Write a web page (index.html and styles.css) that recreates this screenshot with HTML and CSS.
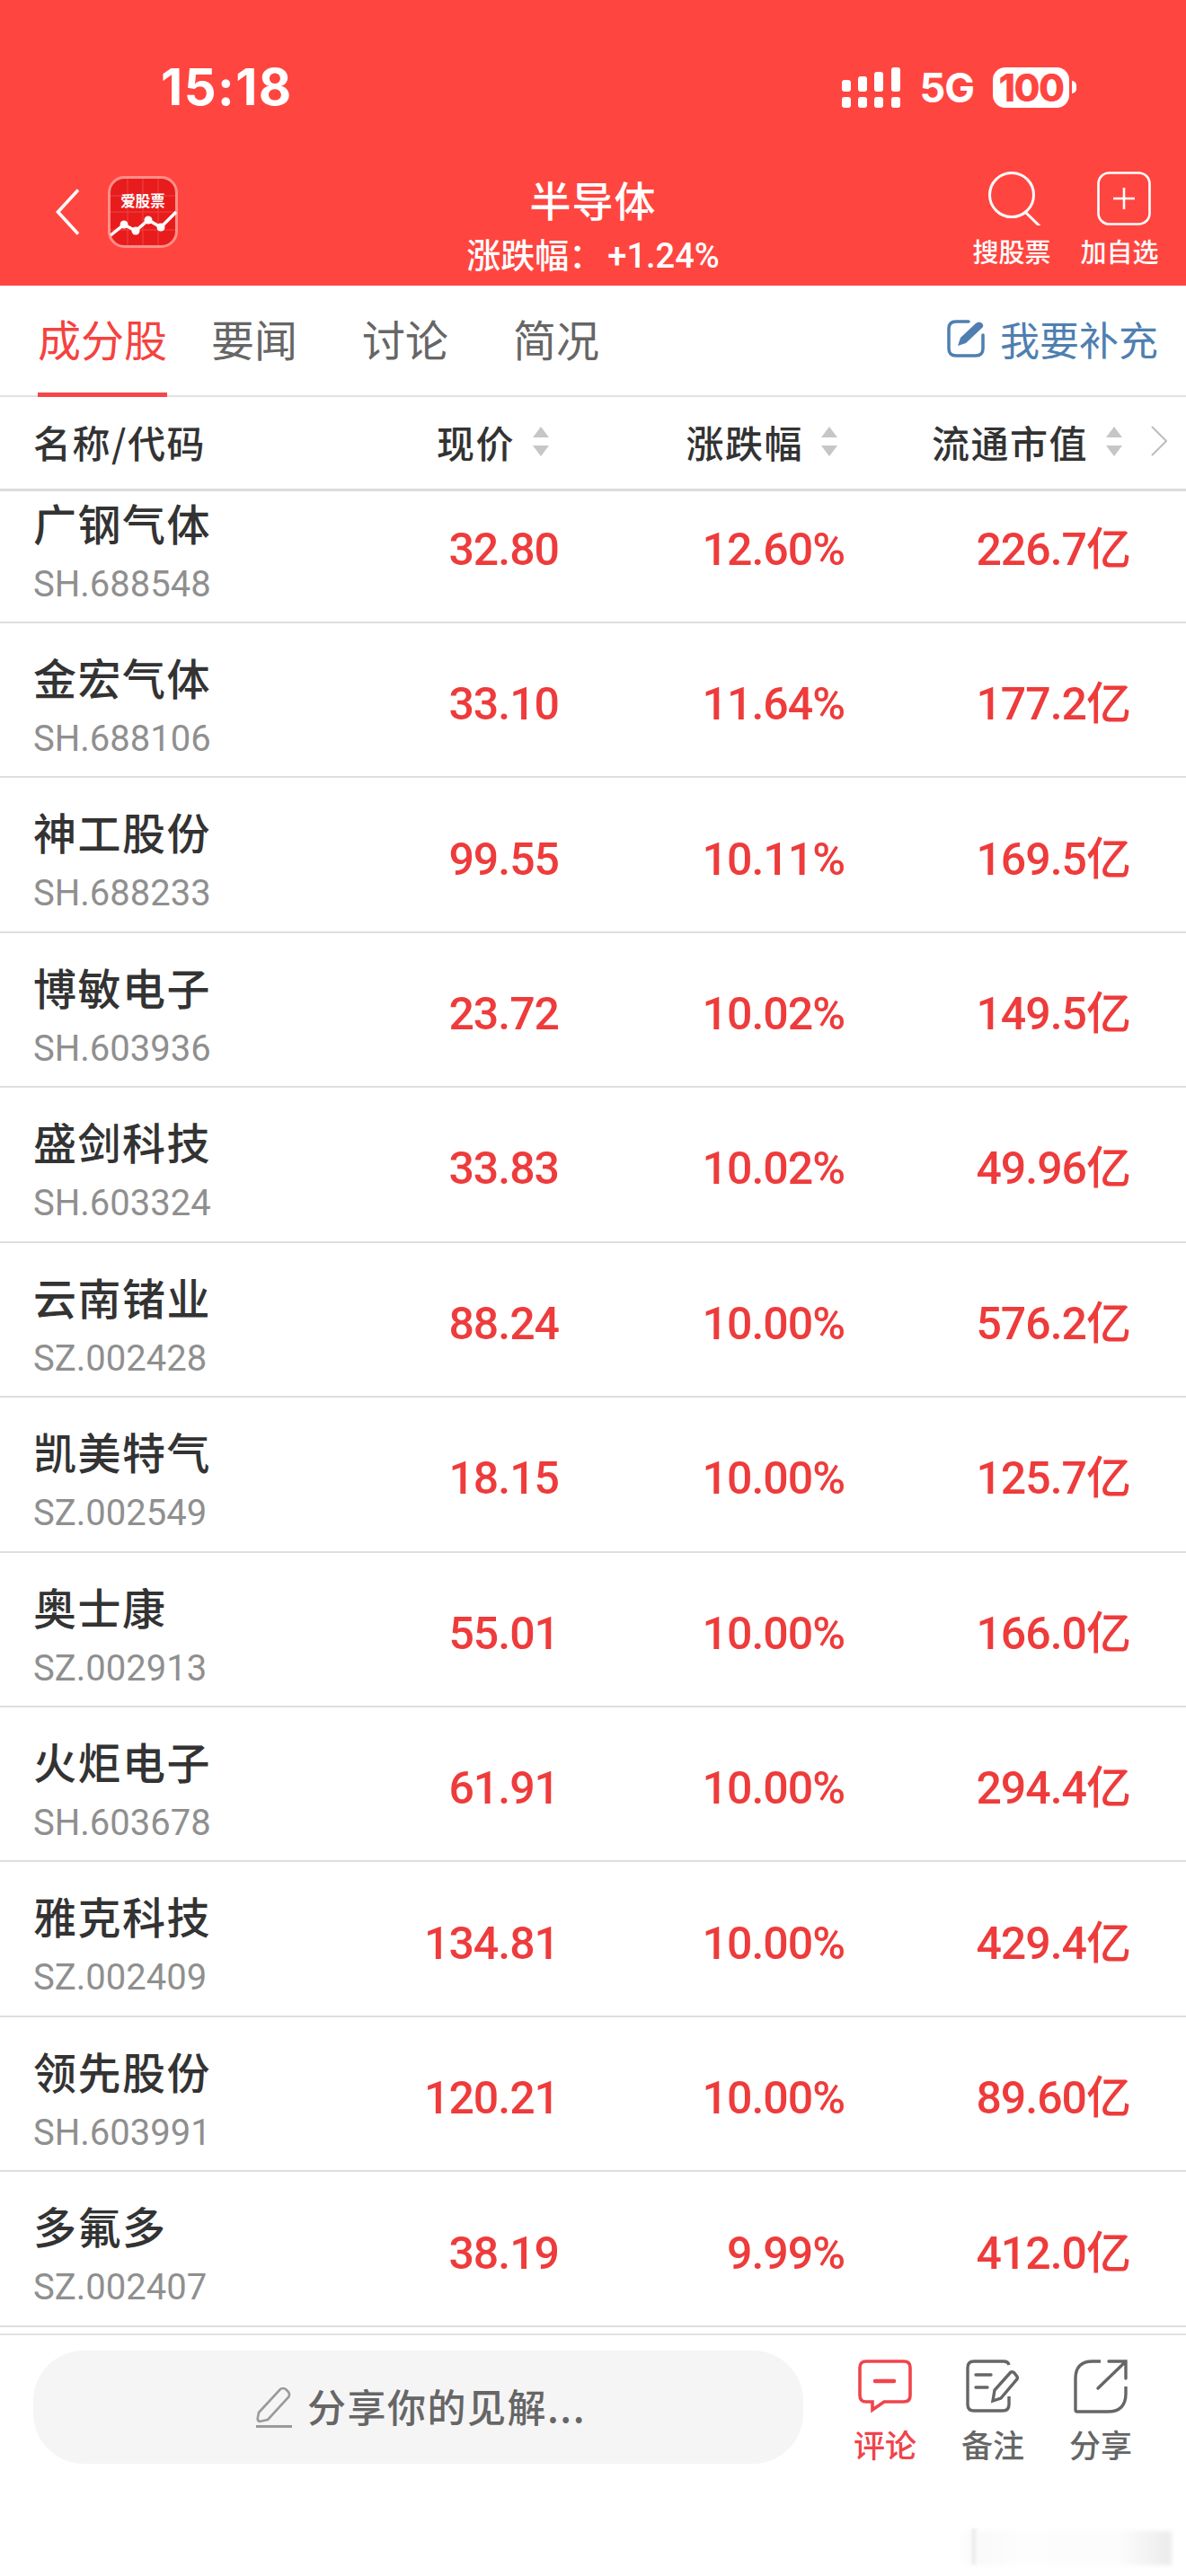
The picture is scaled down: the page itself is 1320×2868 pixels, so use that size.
FILE: index.html
```html
<!DOCTYPE html>
<html lang="zh-CN">
<head>
    <meta charset="UTF-8">
    <meta name="viewport" content="width=device-width, initial-scale=1.0">
    <title>半导体</title>
    <link rel="stylesheet" href="styles.css">
</head>
<body>
<div class="page">
    <header class="top">
        <div class="status">
            <span class="time">15:18</span>
            <div class="status-right">
                <svg class="signal" width="65" height="45" viewBox="0 0 65 45" fill="#fff">
                    <rect x="0" y="14" width="10" height="13" rx="3"/><rect x="18" y="10" width="10" height="17" rx="3"/>
                    <rect x="36" y="5" width="10" height="22" rx="3"/><rect x="55" y="0" width="10" height="27" rx="3"/>
                    <rect x="0" y="33" width="10" height="12" rx="3"/><rect x="18" y="33" width="10" height="12" rx="3"/>
                    <rect x="36" y="33" width="10" height="12" rx="3"/><rect x="55" y="33" width="10" height="12" rx="3"/>
                </svg>
                <span class="net">5G</span>
                <span class="battery">100</span>
                <span class="battery-nub"></span>
            </div>
        </div>
        <div class="nav">
            <div class="nav-left">
                <svg width="26" height="52" viewBox="0 0 26 52" fill="none" stroke="#fff" stroke-width="3.6"><path d="M25 1.5 2.5 26 25 50.500"/></svg>
                <svg class="logo" width="78" height="80" viewBox="0 0 78 80">
                    <rect x="1.500" y="1.500" width="75" height="77" rx="17" fill="#e81c1c" stroke="#ff8f88" stroke-width="3"/>
                    <path d="M3 22H75M3 40H75M3 60H75M22 3V77M39 3V77M56 3V77" stroke="#ee4444" stroke-width="1"/>
                    <text x="39" y="34" text-anchor="middle" class="logo-text">爱股票</text>
                    <path d="M3 66 18 54 31 61 45 49 59 57 76 40" fill="none" stroke="#fff" stroke-width="3.500"/>
                    <circle cx="18" cy="54" r="4.500" fill="#fff"/><circle cx="31" cy="61" r="4.500" fill="#fff"/>
                    <circle cx="45" cy="49" r="4.500" fill="#fff"/><circle cx="59" cy="57" r="4.500" fill="#fff"/>
                </svg>
            </div>
            <div class="nav-title">
                <div class="title">半导体</div>
                <div class="subtitle">涨跌幅：<span class="subtitle-num">+1.24%</span></div>
            </div>
            <div class="nav-right">
                <div class="nav-btn">
                    <svg class="nav-search" width="62" height="60" viewBox="0 0 62 60" fill="none" stroke="#fff" stroke-width="3"><circle cx="26" cy="26" r="24.500"/><path d="M41 45 60 59" transform="rotate(8 41 45)" stroke-linecap="round"/></svg>
                    <span>搜股票</span>
                </div>
                <div class="nav-btn">
                    <svg class="nav-plus" width="60" height="60" viewBox="0 0 60 60" fill="none" stroke="#fff" stroke-width="2.600"><rect x="1.500" y="1.500" width="57" height="57" rx="12"/><path d="M30 18V42M18 30H42"/></svg>
                    <span>加自选</span>
                </div>
            </div>
        </div>
    </header>

    <nav class="tabs">
        <span class="tab active">成分股</span>
        <span class="tab tab-second">要闻</span>
        <span class="tab">讨论</span>
        <span class="tab">简况</span>
        <div class="supplement">
            <svg width="42" height="42" viewBox="0 0 42 42" fill="none" stroke="#4f7fb0" stroke-width="3.500">
                <path d="M24 2H10Q2 2 2 10V32Q2 40 10 40H32Q40 40 40 32V17" stroke-linecap="round"/>
                <path d="M12 29 15 20 32 4Q36 1 39 4T38 10L21 26Z" fill="#4f7fb0" stroke="none"/>
            </svg>
            <span>我要补充</span>
        </div>
    </nav>

    <div class="thead">
        <span class="th th-name">名称/代码</span>
        <span class="th">现价<svg class="sort" width="18" height="33" viewBox="0 0 18 33" fill="#c6c6c6"><path d="M9 0 18 12H0ZM9 33 0 21H18Z"/></svg></span>
        <span class="th">涨跌幅<svg class="sort" width="18" height="33" viewBox="0 0 18 33" fill="#c6c6c6"><path d="M9 0 18 12H0ZM9 33 0 21H18Z"/></svg></span>
        <span class="th">流通市值<svg class="sort" width="18" height="33" viewBox="0 0 18 33" fill="#c6c6c6"><path d="M9 0 18 12H0ZM9 33 0 21H18Z"/></svg></span>
        <svg class="more" width="18" height="34" viewBox="0 0 18 34" fill="none" stroke="#bdbdbd" stroke-width="2"><path d="M1 1 17 17 1 33"/></svg>
    </div>

    <div class="list">
        <div class="row row-first"><div class="stock"><div class="name">广钢气体</div><div class="code">SH.688548</div></div><span class="num">32.80</span><span class="num">12.60%</span><span class="num">226.7亿</span></div>
        <div class="row"><div class="stock"><div class="name">金宏气体</div><div class="code">SH.688106</div></div><span class="num">33.10</span><span class="num">11.64%</span><span class="num">177.2亿</span></div>
        <div class="row"><div class="stock"><div class="name">神工股份</div><div class="code">SH.688233</div></div><span class="num">99.55</span><span class="num">10.11%</span><span class="num">169.5亿</span></div>
        <div class="row"><div class="stock"><div class="name">博敏电子</div><div class="code">SH.603936</div></div><span class="num">23.72</span><span class="num">10.02%</span><span class="num">149.5亿</span></div>
        <div class="row"><div class="stock"><div class="name">盛剑科技</div><div class="code">SH.603324</div></div><span class="num">33.83</span><span class="num">10.02%</span><span class="num">49.96亿</span></div>
        <div class="row"><div class="stock"><div class="name">云南锗业</div><div class="code">SZ.002428</div></div><span class="num">88.24</span><span class="num">10.00%</span><span class="num">576.2亿</span></div>
        <div class="row"><div class="stock"><div class="name">凯美特气</div><div class="code">SZ.002549</div></div><span class="num">18.15</span><span class="num">10.00%</span><span class="num">125.7亿</span></div>
        <div class="row"><div class="stock"><div class="name">奥士康</div><div class="code">SZ.002913</div></div><span class="num">55.01</span><span class="num">10.00%</span><span class="num">166.0亿</span></div>
        <div class="row"><div class="stock"><div class="name">火炬电子</div><div class="code">SH.603678</div></div><span class="num">61.91</span><span class="num">10.00%</span><span class="num">294.4亿</span></div>
        <div class="row"><div class="stock"><div class="name">雅克科技</div><div class="code">SZ.002409</div></div><span class="num">134.81</span><span class="num">10.00%</span><span class="num">429.4亿</span></div>
        <div class="row"><div class="stock"><div class="name">领先股份</div><div class="code">SH.603991</div></div><span class="num">120.21</span><span class="num">10.00%</span><span class="num">89.60亿</span></div>
        <div class="row"><div class="stock"><div class="name">多氟多</div><div class="code">SZ.002407</div></div><span class="num">38.19</span><span class="num">9.99%</span><span class="num">412.0亿</span></div>
    </div>

    <footer class="bottom">
        <div class="pill">
            <svg width="40" height="45" viewBox="0 0 40 45" fill="none" stroke="#9a9a9a" stroke-width="2.600">
                <path d="M3 28 27 2Q30 0 33 2L36 5Q38 8 36 11L13 36 4 38Q1 37 2 33Z"/>
                <path d="M0 43.500H40" stroke-width="3"/>
            </svg>
            <span>分享你的见解...</span>
        </div>
        <div class="action action-on">
            <svg width="60" height="60" viewBox="0 0 60 60" fill="none" stroke="#f0444b" stroke-width="3.600">
                <path d="M9 2H51Q58 2 58 9V40Q58 47 51 47H29L16 56V47H9Q2 47 2 40V9Q2 2 9 2Z"/>
                <path d="M19 24H40" stroke-width="4.500" stroke-linecap="round"/>
            </svg>
            <span>评论</span>
        </div>
        <div class="action">
            <svg width="60" height="60" viewBox="0 0 60 60" fill="none" stroke="#666" stroke-width="3.400">
                <path d="M48 6Q47 2 42 2H9Q2 2 2 9V50Q2 57 9 57H41Q48 57 48 50V41"/>
                <path d="M11 17H28M11 31H24" stroke-linecap="round"/>
                <path d="M30 46 32 34 50 14Q52 13 54 15L57 19Q58 21 56 23L39 43Z"/>
            </svg>
            <span>备注</span>
        </div>
        <div class="action">
            <svg width="60" height="60" viewBox="0 0 60 60" fill="none" stroke="#666" stroke-width="3.400">
                <path d="M30 2H21Q2 2 2 21V56Q2 58 4 58H38Q58 58 58 38V30"/>
                <path d="M27 32 57 3M39 2H58V21" stroke-linecap="round"/>
            </svg>
            <span>分享</span>
        </div>
    </footer>
    <div class="home-smudge"></div>
    <div class="home-mark"></div>
</div>
</body>
</html>
```

FILE: styles.css
```css
* {
    box-sizing: border-box;
}
body {
    margin: 0;
    background: #fff;
    font-family: "Noto Sans CJK SC", sans-serif;
    color: #333;
}
svg {
    display: block;
    flex: none;
}
.page {
    position: relative;
    width: 1320px;
    height: 2868px;
    display: flex;
    flex-direction: column;
    overflow: hidden;
}

/* red header */
.top {
    height: 318px;
    background: #ff4540;
    color: #fff;
    flex: none;
}
.status {
    height: 188px;
    padding: 6px 122px 0 179px;
    display: flex;
    align-items: center;
    justify-content: space-between;
}
.time {
    font-family: Inter, sans-serif;
    font-weight: 700;
    font-size: 56px;
    letter-spacing: 1.5px;
}
.status-right {
    display: flex;
    align-items: center;
}
.net {
    font-family: Inter, sans-serif;
    font-weight: 700;
    font-size: 45px;
    line-height: 45px;
    margin-left: 21px;
    letter-spacing: -1px;
}
.battery {
    width: 85px;
    height: 45px;
    margin-left: 21px;
    background: #fff;
    border-radius: 14px;
    color: #ff4540;
    font-family: Inter, sans-serif;
    font-weight: 800;
    font-size: 42px;
    line-height: 45px;
    text-align: center;
    letter-spacing: -1.5px;
}
.battery-nub {
    width: 5px;
    height: 14px;
    margin-left: 3px;
    background: #fff;
    border-radius: 0 5px 5px 0;
}
.nav {
    height: 130px;
    display: grid;
    grid-template-columns: 1fr auto 1fr;
}
.nav-left {
    display: flex;
    align-items: center;
    align-self: start;
    height: 80px;
    padding: 0 0 0 62px;
    margin-top: 8px;
}
.logo {
    margin-left: 32px;
}
.logo-text {
    font-family: "Noto Sans CJK SC", sans-serif;
    font-size: 16.500px;
    font-weight: 700;
    fill: #fff;
}
.nav-title {
    padding-top: 3px;
    text-align: center;
    font-weight: 500;
}
.title {
    font-size: 46px;
    line-height: 60px;
    letter-spacing: 1px;
}
.subtitle {
    margin-top: 4px;
    font-size: 38px;
    line-height: 54px;
}
.subtitle-num {
    font-family: Roboto, sans-serif;
    font-weight: 500;
    margin-left: 5px;
}
.nav-right {
    display: flex;
    justify-content: flex-end;
    padding: 3px 14px 0 0;
}
.nav-btn {
    width: 120px;
    display: flex;
    flex-direction: column;
    align-items: center;
    font-size: 29px;
    font-weight: 500;
    line-height: 36px;
}
.nav-btn span {
    margin-top: 10px;
}
.nav-search {
    margin-left: 10px;
}
.nav-plus {
    margin-left: 10px;
}

/* tabs */
.tabs {
    height: 124px;
    flex: none;
    display: flex;
    border-bottom: 2px solid #e2e2e2;
    color: #666;
}
.tab {
    height: 124px;
    padding-bottom: 4px;
    margin-left: 72px;
    font-size: 48px;
    display: flex;
    align-items: center;
    border-bottom: 5px solid transparent;
}
.tab.active {
    margin-left: 42px;
    color: #f5423f;
    border-bottom-color: #f5464a;
}
.tab.tab-second {
    margin-left: 49px;
}
.supplement {
    margin-left: auto;
    padding: 0 31px 4px 0;
    display: flex;
    align-items: center;
    font-size: 44px;
    color: #4f7fb0;
}
.supplement span {
    margin-left: 17px;
}

/* column titles */
.thead {
    height: 105px;
    flex: none;
    padding: 0 21px 4px 37px;
    display: grid;
    grid-template-columns: 374px 200px 321px 317px 50px;
    align-items: center;
    border-bottom: 3px solid #dcdcdc;
}
.th {
    display: flex;
    align-items: center;
    justify-content: flex-end;
    font-size: 42px;
    font-weight: 500;
    letter-spacing: 1.5px;
    color: #333;
}
.th-name {
    justify-content: flex-start;
}
.sort {
    margin-left: 20px;
}
.more {
    justify-self: end;
}

/* stock rows */
.list {
    flex: 1;
    overflow: hidden;
}
.row {
    height: 172.450px;
    padding: 0 60px 0 37px;
    display: grid;
    grid-template-columns: 385px 200px 318px 318px;
    align-items: center;
    border-bottom: 2px solid #dedede;
}
.row-first {
    margin-top: -25.500px;
}
.stock {
    align-self: start;
    padding-top: 29px;
}
.name {
    font-size: 48px;
    font-weight: 500;
    line-height: 60px;
    letter-spacing: 1.5px;
    color: #333;
}
.code {
    margin-top: 18px;
    font-family: Roboto, sans-serif;
    font-size: 40px;
    line-height: 44px;
    color: #8f8f8f;
}
.num {
    padding-top: 10px;
    text-align: right;
    font-family: Roboto, "Noto Sans CJK SC", sans-serif;
    font-size: 50px;
    font-weight: 500;
    line-height: 60px;
    letter-spacing: -1px;
    color: #ee3b3b;
}

/* bottom bar */
.bottom {
    height: 270px;
    flex: none;
    padding: 17px 35px 0 37px;
    display: flex;
    align-items: flex-start;
    border-top: 2px solid #e2e2e2;
}
.pill {
    width: 857px;
    height: 126px;
    margin-right: 31px;
    border-radius: 56px;
    background: #f5f5f5;
    display: flex;
    align-items: center;
    justify-content: flex-start;
    padding-left: 248px;
    font-size: 43px;
    font-weight: 500;
    letter-spacing: 1.5px;
    color: #666;
}
.pill span {
    margin: 0 0 5px 17px;
}
.action {
    width: 120px;
    padding-top: 10px;
    display: flex;
    flex-direction: column;
    align-items: center;
    font-size: 35px;
    font-weight: 500;
    line-height: 44px;
    color: #666;
}
.action span {
    margin-top: 12px;
}
.action-on {
    color: #f0444b;
}

/* leftover of the home indicator, sits over the empty part of the bar */
.home-smudge {
    position: absolute;
    left: 1066px;
    top: 2818px;
    width: 238px;
    height: 38px;
    background: linear-gradient(to right, #fff, #f9f9f9 8%, #fdfdfd 30%, #fcfcfc 75%, #ececec 99%);
    filter: blur(2px);
}
.home-mark {
    position: absolute;
    left: 1082px;
    top: 2815px;
    width: 8px;
    height: 40px;
    background: linear-gradient(to right, #e8e8e8, #fff);
    filter: blur(1px);
}
```
